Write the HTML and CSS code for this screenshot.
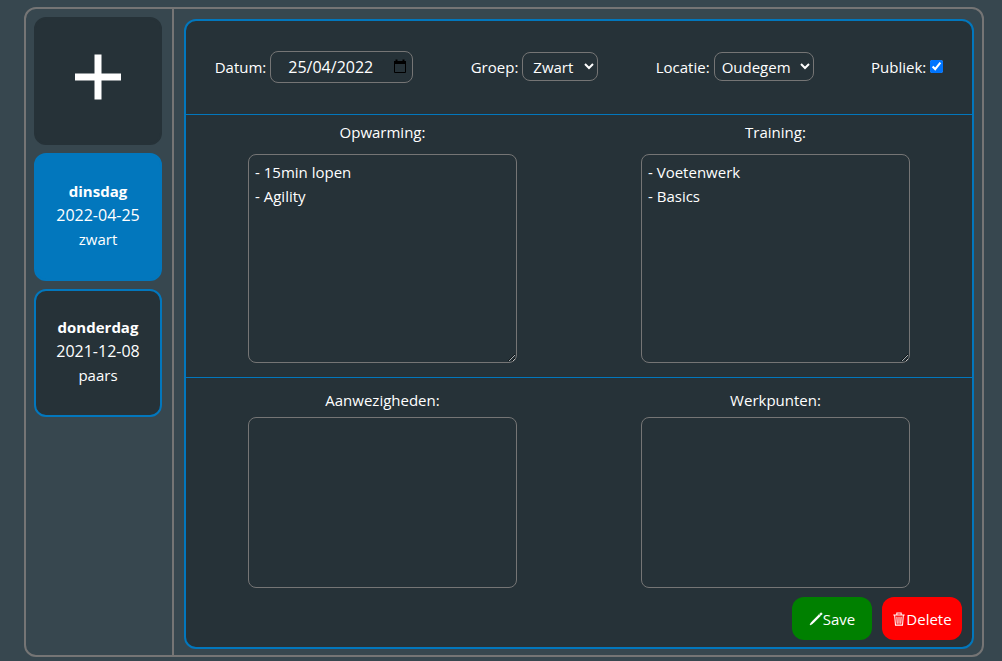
FILE: index.html
```html
<!DOCTYPE html>
<html lang="nl">
<head>
<meta charset="utf-8">
<meta name="viewport" content="width=device-width, initial-scale=1">
<title>Trainingen</title>
<link rel="stylesheet" href="styles.css">
</head>
<body>
<div class="shell">
  <nav class="sidebar" aria-label="Trainingen">
    <button class="tile tile-add" type="button" aria-label="Toevoegen">
      <svg class="plus" viewBox="0 0 46 46" aria-hidden="true"><path d="M23 0.500v45M0 23h46"/></svg>
    </button>
    <button class="tile tile-active" type="button"><strong>dinsdag</strong><span class="tile-date">2022-04-25</span><span>zwart</span></button>
    <button class="tile" type="button"><strong>donderdag</strong><span class="tile-date">2021-12-08</span><span>paars</span></button>
  </nav>
  <form class="panel">
    <div class="fields">
      <div class="field">
        <label for="datum">Datum:</label>
        <div class="date">
          <input class="date-input" id="datum" type="text" inputmode="numeric" value="25/04/2022">
          <button class="date-button" type="button" aria-label="Kies datum">
            <svg class="calendar" viewBox="0 0 14 15" aria-hidden="true"><path class="calendar-line" d="M1.500 2.500h11v11h-11z"/><path d="M1 2h12v3H1zM2.500 0.500h2V2h-2zM9.500 0.500h2V2h-2z"/></svg>
          </button>
        </div>
      </div>
      <div class="field">
        <label for="groep">Groep:</label>
        <select class="select select-group" id="groep"><option>Zwart</option><option>Paars</option></select>
      </div>
      <div class="field">
        <label for="locatie">Locatie:</label>
        <select class="select select-place" id="locatie"><option>Oudegem</option></select>
      </div>
      <div class="field">
        <label for="publiek">Publiek:</label>
        <input class="check" id="publiek" type="checkbox" checked>
      </div>
    </div>
    <div class="row row-plan">
      <div class="cell">
        <label for="opwarming">Opwarming:</label>
        <textarea class="box" id="opwarming">- 15min lopen
- Agility</textarea>
      </div>
      <div class="cell">
        <label for="training">Training:</label>
        <textarea class="box" id="training">- Voetenwerk
- Basics</textarea>
      </div>
    </div>
    <div class="row row-notes">
      <div class="cell">
        <label for="aanwezigheden">Aanwezigheden:</label>
        <textarea class="box box-fixed" id="aanwezigheden"></textarea>
      </div>
      <div class="cell">
        <label for="werkpunten">Werkpunten:</label>
        <textarea class="box box-fixed" id="werkpunten"></textarea>
      </div>
    </div>
    <div class="actions">
      <button class="action action-save" type="button">
        <svg class="icon" viewBox="0 0 16 16" aria-hidden="true"><path d="M13.500 1.200a1 1 0 0 1 1.300 1.300l-1.300 1.400-1.400-1.400zM11.400 3.200l1.400 1.400-8.600 8.600-2.900 1.500 1.500-2.900z" stroke="currentColor"/></svg>Save
      </button>
      <button class="action action-delete" type="button">
        <svg class="icon" viewBox="0 0 16 16" aria-hidden="true"><path d="M1.500 3.500h13M3 3.500l1 11.500h8l1-11.500M5.500 3V1.200h5V3M5.600 5.500l.4 8M8 5.500v8M10.400 5.500l-.4 8" fill="none" stroke="currentColor" stroke-width="1.200"/></svg>Delete
      </button>
    </div>
  </form>
</div>
</body>
</html>
```
FILE: styles.css
```css
* {
  box-sizing: border-box;
}

body {
  margin: 0;
  padding: 7px 18px 4px 24px;
  min-height: 100vh;
  display: flex;
  background: #37474f;
  color: #fff;
  font: 15px/24px "Open Sans", "Noto Sans", sans-serif;
}

button,
input,
select,
textarea {
  font: inherit;
  color: inherit;
}

.shell {
  flex: 1;
  display: flex;
  border: 2px solid #757575;
  border-radius: 12px;
}

.sidebar {
  display: flex;
  flex-direction: column;
  gap: 8px;
  padding: 8px 10px 8px 8px;
  border-right: 2px solid #757575;
}

.tile {
  width: 128px;
  height: 128px;
  padding: 0 0 4px;
  display: flex;
  flex-direction: column;
  align-items: center;
  justify-content: center;
  background: #263238;
  border: 2px solid #0277bd;
  border-radius: 12px;
}

.tile-add {
  padding: 0 0 8px;
  border-color: #263238;
}

.tile-active {
  background: #0277bd;
}

.tile-date {
  font-size: 16px;
}

.plus {
  width: 46px;
  height: 46px;
  fill: none;
  stroke: #fff;
  stroke-width: 7;
}

.panel {
  flex: 1;
  min-width: 0;
  margin: 10px 8px 6px 10px;
  display: flex;
  flex-direction: column;
  background: #263238;
  border: 2px solid #0277bd;
  border-radius: 12px;
}

.fields {
  height: 94px;
  padding: 0 0 2px;
  display: flex;
  align-items: center;
  justify-content: space-around;
  border-bottom: 1px solid #0277bd;
}

.field {
  display: flex;
  align-items: center;
  gap: 4px;
}

.date {
  width: 143px;
  height: 32px;
  display: flex;
  align-items: center;
  border: 1px solid #757575;
  border-radius: 8px;
}

.date-input {
  flex: 1;
  min-width: 0;
  padding: 0 0 0 17px;
  background: none;
  border: 0;
  font-size: 16px;
}

.date-button {
  width: 24px;
  height: 24px;
  padding: 0 5px;
  display: flex;
  align-items: center;
  background: none;
  border: 0;
}

.calendar {
  width: 14px;
  height: 15px;
}

.calendar-line {
  fill: none;
  stroke: #000;
}

.select {
  height: 29px;
  padding: 0 0 0 6px;
  background: #263238;
  border: 1px solid #757575;
  border-radius: 8px;
}

.select-group {
  width: 76px;
}

.select-place {
  width: 100px;
  padding: 0 0 0 3px;
}

.check {
  width: 13px;
  height: 13px;
  margin: 0;
  accent-color: #0075ff;
}

.row {
  display: flex;
}

.row-plan {
  padding: 5px 0 14px;
  border-bottom: 1px solid #0277bd;
}

.row-notes {
  flex: 1;
  padding: 10px 0 9px;
}

.cell {
  flex: 1;
  padding: 0 62px;
  display: flex;
  flex-direction: column;
  align-items: center;
}

.box {
  width: 100%;
  height: 209px;
  margin: 10px 0 0;
  padding: 5px 6px;
  display: block;
  background: none;
  border: 1px solid #757575;
  border-radius: 8px;
}

.box-fixed {
  height: 171px;
  margin: 5px 0 0;
  resize: none;
}

.actions {
  display: flex;
  justify-content: flex-end;
  gap: 10px;
  padding: 0 10px 7px;
}

.action {
  width: 80px;
  height: 43px;
  padding: 0;
  display: flex;
  align-items: center;
  justify-content: center;
  border: 0;
  border-radius: 12px;
}

.action-save {
  background: #008000;
}

.action-delete {
  background: #f00;
}

.icon {
  width: 14px;
  height: 14px;
  fill: currentColor;
}
```
